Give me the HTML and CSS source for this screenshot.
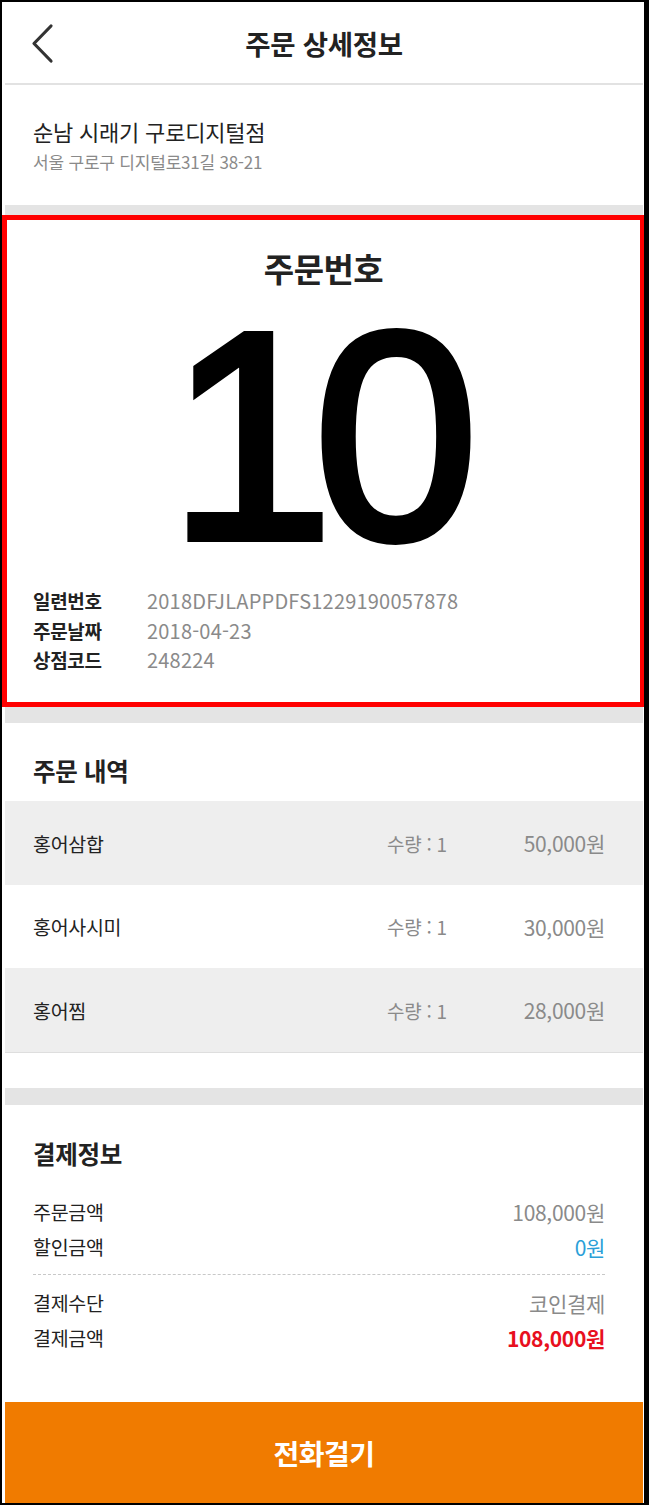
FILE: index.html
```html
<!DOCTYPE html>
<html lang="ko">
<head>
<meta charset="utf-8">
<title>주문 상세정보</title>
<link rel="stylesheet" href="styles.css">
</head>
<body>
<div class="phone">
  <header class="topbar">
    <span class="back">
      <svg width="28" height="42" viewBox="0 0 28 42"><path d="M21 3 L4 20.5 L21 38" fill="none" stroke="#333" stroke-width="3.2" stroke-linecap="round" stroke-linejoin="round"/></svg>
    </span>
    <h1 class="title">주문 상세정보</h1>
  </header>

  <section class="store">
    <div class="store-name">순남 시래기 구로디지털점</div>
    <div class="store-addr">서울 구로구 디지털로31길 38-21</div>
  </section>

  <div class="band band-a"></div>

  <section class="order">
    <div class="order-label">주문번호</div>
    <div class="order-no">10</div>
    <dl class="meta">
      <div class="meta-row"><dt>일련번호</dt><dd>2018DFJLAPPDFS1229190057878</dd></div>
      <div class="meta-row"><dt>주문날짜</dt><dd>2018-04-23</dd></div>
      <div class="meta-row"><dt>상점코드</dt><dd>248224</dd></div>
    </dl>
  </section>

  <div class="band band-b"></div>

  <section class="items">
    <h2 class="sec-title">주문 내역</h2>
    <div class="item-list">
      <div class="item alt h84"><span class="i-name">홍어삼합</span><span class="i-qty">수량 : 1</span><span class="i-price">50,000원</span></div>
      <div class="item h83"><span class="i-name">홍어사시미</span><span class="i-qty">수량 : 1</span><span class="i-price">30,000원</span></div>
      <div class="item alt h84 last"><span class="i-name">홍어찜</span><span class="i-qty">수량 : 1</span><span class="i-price">28,000원</span></div>
    </div>
  </section>

  <div class="band band-c"></div>

  <section class="pay">
    <h2 class="sec-title pay-title">결제정보</h2>
    <div class="pay-row first"><span>주문금액</span><span class="v">108,000원</span></div>
    <div class="pay-row"><span>할인금액</span><span class="v blue">0원</span></div>
    <div class="dash"></div>
    <div class="pay-row"><span>결제수단</span><span class="v">코인결제</span></div>
    <div class="pay-row"><span>결제금액</span><span class="v red">108,000원</span></div>
  </section>

  <button class="call">전화걸기</button>
</div>
</body>
</html>
```

FILE: styles.css
```css
* { box-sizing: border-box; }
html, body { margin: 0; padding: 0; background: #fff; }
body {
  font-family: "Noto Sans CJK KR", "Noto Sans", sans-serif;
  color: #222;
}
.phone {
  width: 649px;
  height: 1505px;
  border-style: solid;
  border-color: #000;
  border-width: 2px 5px 2px 2px;
  padding: 0 1px 0 3px;
  display: flex;
  flex-direction: column;
  overflow: hidden;
}
.topbar {
  height: 83px;
  border-bottom: 2px solid #e2e2e2;
  display: flex;
  align-items: center;
  justify-content: center;
  position: relative;
  flex: none;
}
.back {
  position: absolute;
  left: 25px;
  top: 21px;
  width: 28px;
  height: 42px;
}
.back svg { display: block; }
.title {
  margin: 0;
  font-size: 27.5px;
  font-weight: 700;
  line-height: 36px;
  letter-spacing: -0.3px;
}
.store {
  height: 120px;
  padding: 34px 28px 0;
  flex: none;
}
.store-name {
  font-size: 22px;
  line-height: 24px;
  color: #222;
  letter-spacing: -0.2px;
}
.store-addr {
  margin-top: 9px;
  font-size: 17px;
  line-height: 20px;
  color: #8a8a8a;
  letter-spacing: -0.2px;
}
.band { background: #e4e4e4; flex: none; }
.band-a { height: 10px; }
.band-b { height: 16px; }
.band-c { height: 17px; }

.order {
  height: 492px;
  margin: 0 -1px 0 -3px;
  border: 5px solid #ff0000;
  border-right-width: 4px;
  padding: 30px 0 0 26px;
  flex: none;
}
.order-label {
  text-align: center;
  margin-left: -26px;
  font-size: 33px;
  font-weight: 700;
  line-height: 36px;
  letter-spacing: -0.5px;
}
.order-no {
  margin: 35px 0 0 -26px;
  padding-right: 19px;
  height: 230px;
  text-align: center;
  font-family: "Liberation Sans", Arial, sans-serif;
  font-weight: 400;
  font-size: 295px;
  line-height: 230px;
  letter-spacing: -19px;
  color: #000;
  -webkit-text-stroke: 8px #000;
}
.meta { margin: 35px 0 0; }
.meta-row {
  display: flex;
  height: 29.5px;
  align-items: center;
}
.meta dt {
  width: 114px;
  font-size: 19px;
  font-weight: 700;
  letter-spacing: -0.3px;
}
.meta dd {
  margin: 0;
  font-size: 20px;
  color: #8a8a8a;
  letter-spacing: 0.2px;
}

.items {
  height: 365px;
  padding-top: 30px;
  flex: none;
}
.sec-title {
  margin: 0 0 0 28px;
  font-size: 24.5px;
  font-weight: 700;
  line-height: 36px;
  letter-spacing: -0.3px;
}
.item-list { margin-top: 12px; }
.item {
  display: grid;
  grid-template-columns: 1fr 88px 130px;
  align-items: center;
  padding: 0 38px 0 28px;
  font-size: 19.5px;
  letter-spacing: -0.3px;
}
.h84 { height: 84px; }
.h83 { height: 83px; }
.item.alt { background: #eeeeee; }
.item.last { border-bottom: 1px solid #dedede; height: 85px; }
.i-name { color: #222; }
.i-qty { color: #8a8a8a; font-size: 19px; }
.i-price { color: #8a8a8a; text-align: right; font-size: 21px; letter-spacing: -0.3px; }

.pay {
  height: 297px;
  padding: 31px 38px 0 28px;
  flex: none;
}
.pay-title { margin-left: 0; }
.pay-row {
  display: flex;
  justify-content: space-between;
  align-items: center;
  height: 35px;
  font-size: 19.5px;
  letter-spacing: -0.3px;
}
.pay-row.first { margin-top: 22px; }
.pay-row .v { color: #8a8a8a; font-size: 21px; }
.pay-row .v.blue { color: #2b9fd8; }
.pay-row .v.red { color: #e8101e; font-weight: 700; }
.dash {
  margin: 10px 0;
  border-top: 1px dashed #c8c8c8;
}

.call {
  flex: 1;
  border: 0;
  margin: 0;
  width: 100%;
  background: #f07b00;
  color: #fff;
  font-family: "Noto Sans CJK KR", "Noto Sans", sans-serif;
  font-size: 28px;
  font-weight: 700;
  letter-spacing: -0.5px;
  padding: 0;
}
```
